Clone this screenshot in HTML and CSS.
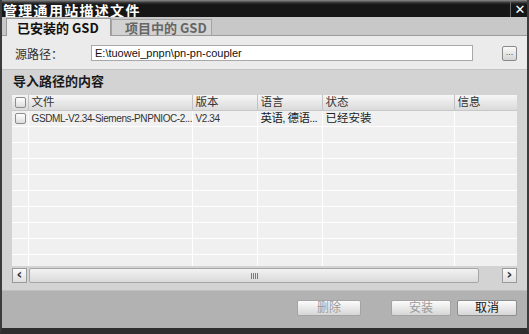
FILE: index.html
```html
<!DOCTYPE html>
<html>
<head lang="zh">
    <meta charset="UTF-8">
    <title>管理通用站描述文件</title>
    <link rel="stylesheet" href="styles.css">
</head>
<body>
<div class="dialog">
    <div class="titlebar">
        <span class="title">管理通用站描述文件</span>
        <span class="close">&#x2715;</span>
    </div>
    <div class="tabs">
        <div class="tab active">已安装的 GSD</div>
        <div class="tab">项目中的 GSD</div>
    </div>
    <div class="source">
        <label>源路径：</label>
        <div class="path">E:\tuowei_pnpn\pn-pn-coupler</div>
        <div class="browse">...</div>
    </div>
    <div class="group">
        <div class="group-title">导入路径的内容</div>
        <div class="grid">
            <table>
                <tr class="head">
                    <th class="c-check"><span class="check"></span></th>
                    <th class="c-file">文件</th>
                    <th class="c-ver">版本</th>
                    <th class="c-lang">语言</th>
                    <th class="c-state">状态</th>
                    <th class="c-info">信息</th>
                </tr>
                <tr>
                    <td><span class="check"></span></td>
                    <td class="latin">GSDML-V2.34-Siemens-PNPNIOC-2...</td>
                    <td class="latin">V2.34</td>
                    <td class="tight">英语, 德语...</td>
                    <td>已经安装</td>
                    <td></td>
                </tr>
                <tr><td></td><td></td><td></td><td></td><td></td><td></td></tr>
                <tr><td></td><td></td><td></td><td></td><td></td><td></td></tr>
                <tr><td></td><td></td><td></td><td></td><td></td><td></td></tr>
                <tr><td></td><td></td><td></td><td></td><td></td><td></td></tr>
                <tr><td></td><td></td><td></td><td></td><td></td><td></td></tr>
                <tr><td></td><td></td><td></td><td></td><td></td><td></td></tr>
                <tr><td></td><td></td><td></td><td></td><td></td><td></td></tr>
                <tr><td></td><td></td><td></td><td></td><td></td><td></td></tr>
                <tr><td></td><td></td><td></td><td></td><td></td><td></td></tr>
            </table>
        </div>
        <div class="hscroll">
            <div class="arrow">&lsaquo;</div>
            <div class="thumb"><span class="grip"></span></div>
            <div class="arrow">&rsaquo;</div>
        </div>
    </div>
    <div class="footer">
        <div class="btn disabled">删除</div>
        <div class="btn disabled">安装</div>
        <div class="btn">取消</div>
    </div>
</div>
</body>
</html>
```

FILE: styles.css
```css
body {
    margin: 0px;
    font-family: "Liberation Sans", "Noto Sans CJK SC", sans-serif;
    font-size: 12px;
    color: #000000;
}

.dialog {
    width: 529px;
    height: 334px;
    box-sizing: border-box;
    border-left: 2px solid #3c3c3c;
    border-right: 2px solid #3c3c3c;
    border-bottom: 6px solid #2e2e2e;
    background: #ebebeb;
    display: flex;
    flex-direction: column;
    overflow: hidden;
}

/* 标题栏 */
.titlebar {
    height: 17px;
    flex: none;
    display: flex;
    align-items: center;
    justify-content: space-between;
    background: linear-gradient(#8c8c8c 0px, #2a2a2a 3px, #161616 5px, #161616 100%);
    margin: 0px -2px;
}

.title {
    color: #ffffff;
    font-family: "Noto Sans CJK SC", sans-serif;
    font-weight: bold;
    font-size: 14px;
    line-height: 14px;
    padding: 2px 0px 0px 3px;
    letter-spacing: 1.3px;
}

.close {
    width: 18px;
    height: 15px;
    margin-top: 2px;
    border-left: 1px solid #6a6a6a;
    color: #ffffff;
    font-family: "DejaVu Sans", sans-serif;
    font-weight: bold;
    font-size: 13px;
    line-height: 15px;
    text-align: center;
}

/* 选项卡 */
.tabs {
    height: 19px;
    flex: none;
    box-sizing: border-box;
    display: flex;
    align-items: flex-end;
    padding-left: 4px;
    background: #c8c8c8;
    border-bottom: 1px solid #9c9c9c;
}

.tab {
    height: 16px;
    box-sizing: border-box;
    padding: 0px 11px 0px 13px;
    width: 101px;
    background: #d2d2d2;
    border: 1px solid #a4a4a4;
    border-bottom: none;
    color: #666666;
    font-family: "Noto Sans CJK SC", sans-serif;
    font-weight: bold;
    font-size: 13px;
    line-height: 16px;
    white-space: nowrap;
}

.tab.active {
    width: 105px;
    height: 18px;
    margin-bottom: -1px;
    padding-left: 10px;
    background: #ebebeb;
    color: #111111;
    border-color: #9a9a9a;
    line-height: 18px;
}

/* 源路径 */
.source {
    height: 34px;
    flex: none;
    box-sizing: border-box;
    display: flex;
    align-items: center;
    padding: 1px 10px 0px 13px;
    border-bottom: 1px solid #c4c4c4;
}

.source label {
    width: 76px;
    color: #333333;
}

.path {
    width: 382px;
    height: 16px;
    box-sizing: border-box;
    border: 1px solid #a8a8a8;
    background: #ffffff;
    font-size: 11px;
    line-height: 14px;
    padding-left: 3px;
    color: #111111;
}

.browse {
    margin-left: auto;
    width: 15px;
    height: 15px;
    box-sizing: border-box;
    border: 1px solid #8a8a8a;
    border-radius: 2px;
    background: linear-gradient(#fafafa, #d4d4d4);
    font-size: 9px;
    line-height: 10px;
    text-align: center;
    color: #555555;
}

/* 导入路径的内容 */
.group {
    flex: 1;
    background: #d3d3d3;
    padding: 0px 10px 7px 10px;
    display: flex;
    flex-direction: column;
}

.group-title {
    height: 25px;
    font-family: "Noto Sans CJK SC", sans-serif;
    font-weight: bold;
    font-size: 13px;
    line-height: 22px;
    padding-left: 1px;
    color: #1a1a1a;
}

.grid {
    height: 171px;
    overflow: hidden;
    background: #f0f0f0;
}

table {
    width: 505px;
    border-collapse: collapse;
    table-layout: fixed;
}

th, td {
    padding: 0px 0px 0px 3px;
    height: 16px;
    box-sizing: border-box;
    border-right: 1px solid #ffffff;
    border-bottom: 1px solid #ffffff;
    text-align: left;
    font-weight: normal;
    font-size: 11.5px;
    white-space: nowrap;
    overflow: hidden;
    color: #222222;
    line-height: 15px;
}

tr.head th {
    height: 15px;
    background: linear-gradient(#f6f6f6, #dadada);
    border-right: 1px solid #c2c2c2;
    border-bottom: 1px solid #c8c8c8;
    color: #333333;
}

.c-check { width: 16px; }
.c-file { width: 164px; }
.c-ver { width: 65px; }
.c-lang { width: 65px; }
.c-state { width: 132px; }
.c-info { width: 63px; }

td.latin {
    font-size: 10px;
    letter-spacing: -0.4px;
    color: #333333;
}

td.tight {
    letter-spacing: -0.6px;
}

.check {
    display: block;
    width: 11px;
    height: 11px;
    box-sizing: border-box;
    border: 1px solid #8c8c8c;
    border-radius: 2px;
    background: linear-gradient(#ffffff, #dcdcdc);
}

/* 滚动条 */
.hscroll {
    margin-top: 2px;
    height: 15px;
    display: flex;
}

.arrow {
    width: 15px;
    height: 15px;
    box-sizing: border-box;
    border: 1px solid #9a9a9a;
    background: linear-gradient(#fbfbfb, #dedede);
    font-family: "DejaVu Sans", sans-serif;
    font-weight: bold;
    font-size: 14px;
    line-height: 11px;
    text-align: center;
    color: #333333;
}

.thumb {
    margin-left: 2px;
    width: 450px;
    margin-right: auto;
    box-sizing: border-box;
    border: 1px solid #a6a6a6;
    border-radius: 2px;
    background: linear-gradient(#f2f2f2, #dadada);
    display: flex;
    align-items: center;
    justify-content: center;
}

.grip {
    width: 7px;
    height: 6px;
    background: repeating-linear-gradient(90deg, #7a7a7a 0px, #7a7a7a 1px, transparent 1px, transparent 2px);
}

/* 底部按钮 */
.footer {
    height: 38px;
    flex: none;
    box-sizing: border-box;
    background: #b2b2b2;
    border-top: 1px solid #c0c0c0;
    display: flex;
    justify-content: flex-end;
    align-items: flex-start;
    padding: 9px 10px 0px 0px;
    gap: 6px;
}

.btn {
    width: 60px;
    height: 16px;
    box-sizing: border-box;
    border: 1px solid #8e8e8e;
    border-radius: 2px;
    background: linear-gradient(#fcfcfc, #d6d6d6);
    text-align: center;
    line-height: 14px;
    color: #111111;
}

.btn.disabled {
    color: #9a9a9a;
    border-color: #a4a4a4;
}

.btn:first-child {
    margin-right: 24px;
    width: 64px;
}
```
